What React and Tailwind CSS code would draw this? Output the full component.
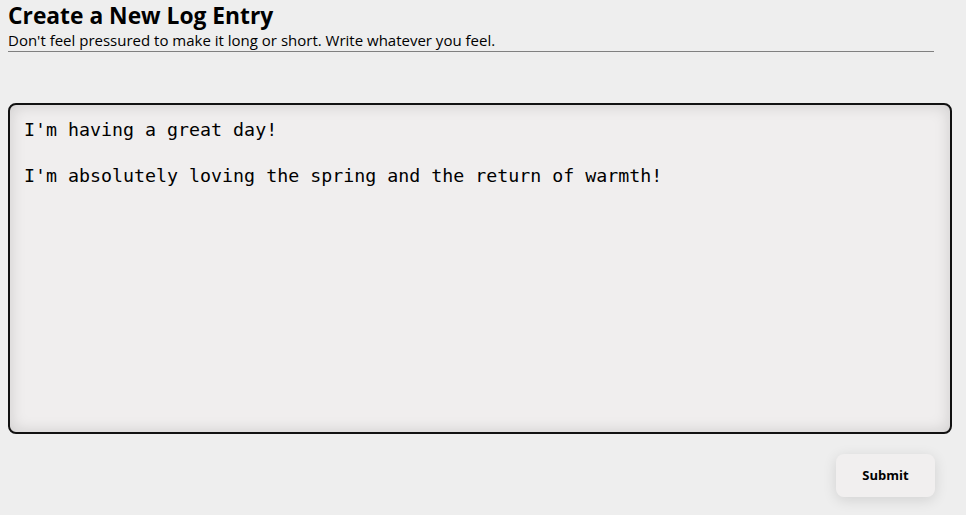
import React from 'react';

const entryText = `I'm having a great day!

I'm absolutely loving the spring and the return of warmth!`;

const App = () => {
  return (
    <div className="min-h-screen bg-[#eeeeee] px-2 pt-[2px] font-['Open_Sans',sans-serif] text-black">
      {/* ── Header ── */}
      <div className="w-[926px] border-b border-[#808080]">
        <h2 className="text-[22.8px] font-bold leading-[28px]">Create a New Log Entry</h2>
        <p className="text-[15px] leading-[20px] pb-[1px]">
          Don't feel pressured to make it long or short. Write whatever you feel.
        </p>
      </div>

      {/* ── Entry ── */}
      <textarea
        readOnly
        value={entryText}
        className="mt-[51px] block w-[944px] h-[331px] resize-none rounded-lg border-2 border-[#111] bg-[#f0eeee] px-[14px] pt-[13px] pb-2 font-['DejaVu_Sans_Mono',monospace] text-[18.3px] leading-[23px] shadow-[inset_0_0_16px_rgba(0,0,0,0.15)] outline-none"
      />

      {/* ── Footer ── */}
      <div className="flex w-[927px] justify-end pt-5">
        <button className="h-[43px] w-[99px] rounded-lg bg-[#f1efef] text-[13px] font-bold shadow-[0_3px_14px_rgba(0,0,0,0.12)]">
          Submit
        </button>
      </div>
    </div>
  );
};

export default App;
